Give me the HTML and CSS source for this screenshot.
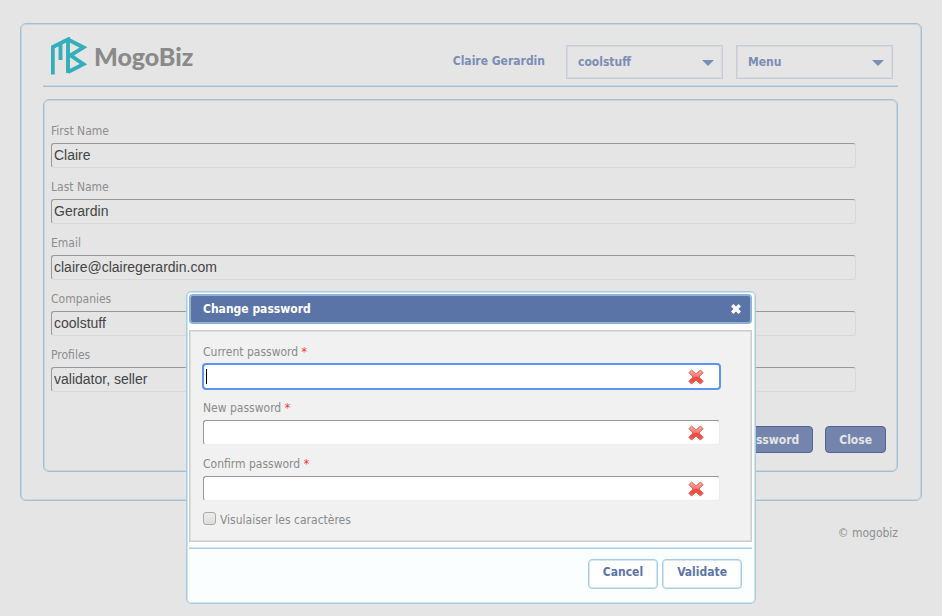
FILE: index.html
```html
<!DOCTYPE html>
<html lang="en">
<head>
<meta charset="utf-8">
<title>MogoBiz</title>
<link rel="stylesheet" href="styles.css">
</head>
<body>
<svg class="defs" aria-hidden="true">
  <defs>
    <linearGradient id="red" x1="0" y1="0" x2="0" y2="1">
      <stop offset="0" stop-color="#f9a9a5"/>
      <stop offset=".45" stop-color="#f77c76"/>
      <stop offset=".55" stop-color="#f4473d"/>
      <stop offset="1" stop-color="#f2564c"/>
    </linearGradient>
    <symbol id="cross" viewBox="0 0 16 16">
      <path d="M3.5 1 8 4.8 12.5 1 15.2 3.7 11 8l4.2 4.3-2.7 2.7L8 11.2 3.5 15 .8 12.3 5 8 .8 3.7Z" fill="url(#red)" stroke="#d0665f" stroke-width=".9" stroke-linejoin="round"/>
    </symbol>
  </defs>
</svg>
<main class="window">
  <header class="header">
    <a class="brand" href="#">
      <svg class="brand-mark" viewBox="0 0 36 38" aria-hidden="true">
        <path d="M1.800 37.500V10L17 2.400V36M17 2.400 32.500 10.400 19.500 18.300 32.500 27.200 17 35M9.500 23V6" fill="none" stroke="#35aebb" stroke-width="3.900"/>
      </svg>
      <span class="brand-name">MogoBiz</span>
    </a>
    <nav class="nav">
      <span class="user">Claire Gerardin</span>
      <div class="picker">
        <select aria-label="Company"><option>coolstuff</option></select>
      </div>
      <div class="picker">
        <select aria-label="Menu"><option>Menu</option></select>
      </div>
    </nav>
  </header>
  <section class="panel">
    <div class="field"><label for="first">First Name</label><input id="first" type="text" value="Claire" readonly></div>
    <div class="field"><label for="last">Last Name</label><input id="last" type="text" value="Gerardin" readonly></div>
    <div class="field"><label for="email">Email</label><input id="email" type="text" value="claire@clairegerardin.com" readonly></div>
    <div class="field"><label for="companies">Companies</label><input id="companies" type="text" value="coolstuff" readonly></div>
    <div class="field"><label for="profiles">Profiles</label><input id="profiles" type="text" value="validator, seller" readonly></div>
    <div class="actions">
      <button class="primary" type="button">Change password</button>
      <button class="primary" type="button">Close</button>
    </div>
  </section>
</main>
<footer class="footer">© mogobiz</footer>

<form class="dialog" role="dialog" aria-labelledby="dialog-title">
  <div class="titlebar">
    <h2 id="dialog-title">Change password</h2>
    <button class="dismiss" type="button" aria-label="Close dialog">
      <svg viewBox="0 0 12 12" aria-hidden="true"><path d="M2.200 2.200 9.800 9.800M9.800 2.200 2.200 9.800" stroke="#fff" stroke-width="3.400"/></svg>
    </button>
  </div>
  <div class="content">
    <div class="field active">
      <label for="current">Current password <span class="required">*</span></label>
      <div class="entry"><input id="current" type="password"><svg class="invalid" aria-hidden="true"><use href="#cross"/></svg></div>
    </div>
    <div class="field">
      <label for="new">New password <span class="required">*</span></label>
      <div class="entry"><input id="new" type="password"><svg class="invalid" aria-hidden="true"><use href="#cross"/></svg></div>
    </div>
    <div class="field">
      <label for="confirm">Confirm password <span class="required">*</span></label>
      <div class="entry"><input id="confirm" type="password"><svg class="invalid" aria-hidden="true"><use href="#cross"/></svg></div>
    </div>
    <div class="reveal"><input id="reveal" type="checkbox"><label for="reveal">Visulaiser les caractères</label></div>
  </div>
  <div class="buttons">
    <button class="secondary" type="button">Cancel</button>
    <button class="secondary" type="submit">Validate</button>
  </div>
</form>
</body>
</html>
```
FILE: styles.css
```css
* { box-sizing: border-box; }

body {
  margin: 0;
  padding: 23px 20px;
  background: #e5e5e5;
  color: #8e8e8e;
  font: 12px/16px "DejaVu Sans Condensed", "Noto Sans", sans-serif;
}

input, button, select { font: inherit; }

.defs { position: absolute; width: 0; height: 0; }

.window {
  padding: 0 24px 28px;
  border: 1px solid #a3bfd3;
  border-radius: 6px;
  box-shadow: inset 0 0 0 1px #c8d5de;
}

.header {
  display: flex;
  justify-content: space-between;
  align-items: flex-start;
  height: 63px;
  padding: 13px 5px 0 8px;
  border-bottom: 1px solid #a3bfd3;
  box-shadow: inset 0 -1px #c8d5de;
  margin: 0 -1px 12px -2px;
}

.brand {
  display: flex;
  align-items: center;
  gap: 7px;
  color: #8a8a8a;
  text-decoration: none;
}

.brand-mark { width: 36px; height: 38px; }

.brand-name { font: 900 25px/38px Lato, sans-serif; }

.nav {
  display: flex;
  align-items: center;
  gap: 13px;
  padding-top: 8px;
}

.user {
  margin-right: 8px;
  padding-bottom: 2px;
  color: #7b8db5;
  font-weight: 700;
}

.picker { position: relative; }

.picker::after {
  content: "";
  position: absolute;
  right: 9px;
  top: 15px;
  border: 6px solid transparent;
  border-top-color: #7690b8;
  border-bottom: 0;
}

.picker select {
  display: block;
  appearance: none;
  width: 157px;
  height: 34px;
  padding: 0 11px;
  border: 1px solid #c7ccd8;
  border-radius: 0;
  box-shadow: inset 0 0 0 1px #d8dae0;
  background: transparent;
  color: #7b8db5;
  font-weight: 700;
}

.panel {
  margin: 0 -1px 0 -2px;
  padding: 23px 11px 18px 7px;
  border: 1px solid #a3bfd3;
  border-radius: 6px;
  box-shadow: inset 0 0 0 1px #c8d5de;
}

.field { height: 56px; }

.field label { display: block; height: 20px; }

.field input {
  display: block;
  width: 100%;
  height: 25px;
  padding: 0 2px 2px;
  border: 1px solid;
  border-color: #999 #d8d8d8 #d8d8d8 #999;
  border-radius: 3px;
  outline: 0;
  background: transparent;
  color: #444;
  font: 14px/20px "Liberation Sans", sans-serif;
}

.panel .field { padding-right: 30px; }

.actions {
  display: flex;
  justify-content: flex-end;
  gap: 12px;
  padding-top: 23px;
}

.primary {
  height: 27px;
  padding: 0 13px;
  border: 1px solid #53658d;
  border-radius: 4px;
  background: #7384ad;
  color: #e5e5e5;
  font-weight: 700;
}

.footer { padding: 24px 24px 0; text-align: right; }

.dialog {
  position: absolute;
  top: 291px;
  left: calc(50% - 285px);
  width: 570px;
  padding: 2px 3px 1px 2px;
  border: 1px solid #a7cde5;
  border-radius: 5px;
  box-shadow: inset 0 0 0 1px #cfe4f1;
  background: #fff;
  color: #8a8a8a;
}

.titlebar {
  display: flex;
  justify-content: space-between;
  align-items: center;
  height: 30px;
  margin-bottom: 6px;
  padding: 0 8px 0 12px;
  border: 2px solid #8eb3d4;
  border-radius: 4px;
  background: #5b74a8;
}

.titlebar h2 {
  margin: 0;
  color: #fff;
  font-weight: 700;
  font-size: 12px;
}

.dismiss {
  width: 12px;
  height: 12px;
  padding: 0;
  border: 0;
  background: none;
}

.dismiss svg { display: block; }

.content {
  height: 212px;
  margin-bottom: 6px;
  padding: 13px 31px 0 13px;
  border: 1px solid #cdcdcd;
  box-shadow: inset 0 0 0 1px #dcdcdc;
  background: #f1f1f1;
}

.entry { position: relative; }

.dialog .field input {
  padding-right: 48px;
  border-color: #999 #eee #eee #999;
  background: #fff;
}

.dialog .active input { outline: 2px solid #5b96f2; outline-offset: -1px; caret-color: transparent; }

/* Text cursor of the active entry. */
.active .entry::after {
  content: "";
  position: absolute;
  left: 3px;
  top: 5px;
  width: 1px;
  height: 15px;
  background: #000;
}

.invalid {
  position: absolute;
  right: 16px;
  top: 5px;
  width: 16px;
  height: 16px;
}

.required { color: #f33; }

.reveal { display: flex; gap: 4px; }

.reveal input {
  appearance: none;
  width: 13px;
  height: 13px;
  margin: 0;
  border: 1px solid #aaa;
  border-radius: 3px;
  background: linear-gradient(#eee, #dcdcdc);
}

.buttons {
  display: flex;
  justify-content: flex-end;
  gap: 4px;
  padding: 10px 10px 13px;
  border-top: 1px solid #a7cde5;
  box-shadow: 0 -1px #d3e6f2;
  background: #fbfefe;
}

.secondary {
  height: 30px;
  padding: 0 14px 4px;
  border: 1px solid #a7cde5;
  border-radius: 4px;
  box-shadow: inset 0 0 0 1px #d3e6f2;
  background: #fff;
  color: #5b74a8;
  font-weight: 700;
}
```
